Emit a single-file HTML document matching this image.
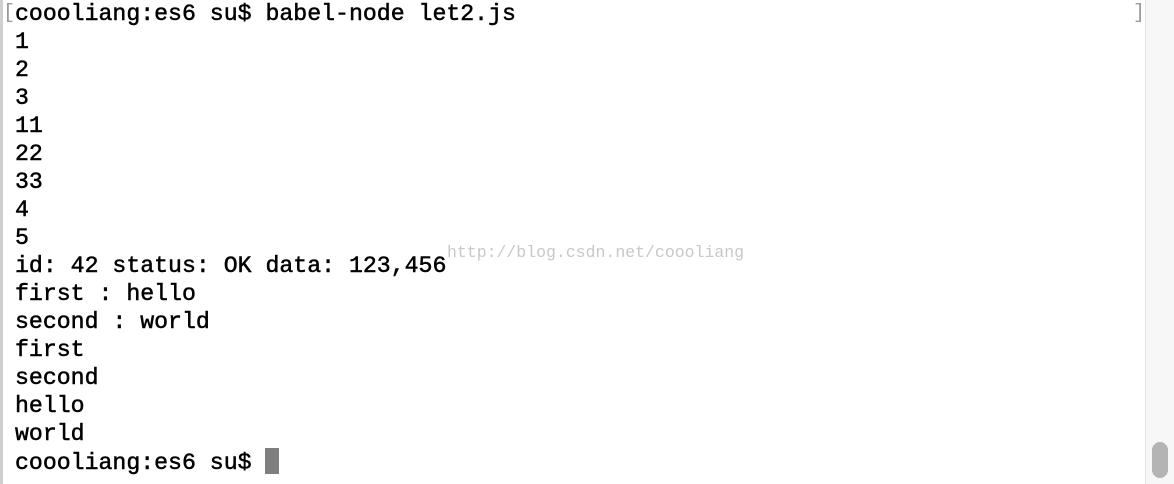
<!DOCTYPE html>
<html><head><style>
html,body{margin:0;padding:0;background:#fff;width:1174px;height:484px;overflow:hidden;position:relative}
.l{position:absolute;left:0;top:0;width:3px;height:484px;background:#cfcfcf}
.sb{position:absolute;left:1145px;top:0;width:29px;height:484px;background:#f7f7f7;border-left:1px solid #e2e2e2}
.th{position:absolute;left:1152px;top:442px;width:16px;height:36px;border-radius:8px;background:#b4b4b4}
.t{position:absolute;left:15px;top:0px;font-family:"Liberation Mono",monospace;font-size:23.2px;line-height:28px;color:#000;white-space:pre;-webkit-text-stroke:0.5px #000}
.br{position:absolute;top:2px;font-family:"Liberation Mono",monospace;font-size:20px;color:#999}
.cur{display:inline-block;width:14px;height:26px;background:#7f7f7f;vertical-align:-5px}
.wm{position:absolute;left:447px;top:243px;font-family:"Liberation Mono",monospace;font-size:16.5px;color:#c8c8c8;white-space:pre}
</style></head><body>
<div class="l"></div>
<div class="br" style="left:3px">[</div>
<div class="br" style="left:1133px">]</div>
<div class="sb"></div><div class="th"></div>
<div class="wm">http://blog.csdn.net/coooliang</div>
<div class="t">coooliang:es6 su$ babel-node let2.js
1
2
3
11
22
33
4
5
id: 42 status: OK data: 123,456
first : hello
second : world
first
second
hello
world
coooliang:es6 su$ <span class="cur"></span></div>
</body></html>
